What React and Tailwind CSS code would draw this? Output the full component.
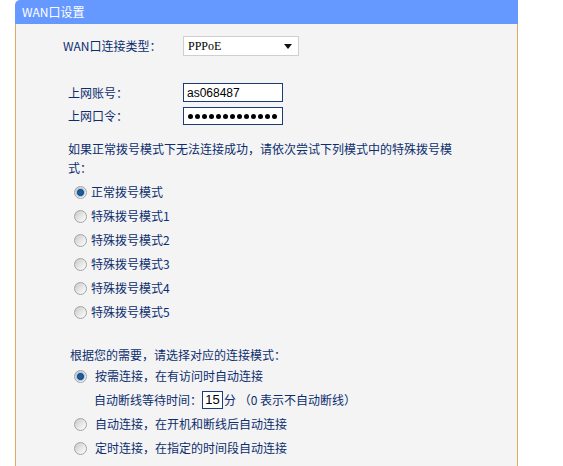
import React from "react";

const Radio = ({ checked }) => {
  return (
    <span className="relative w-[13px] h-[13px] rounded-full border border-[#a4a4a4] bg-gradient-to-br from-[#c8c8c8] via-[#e6e6e6] to-white flex items-center justify-center flex-shrink-0">
      {checked && (
        <span className="w-[7px] h-[7px] rounded-full bg-[#1d5f9c] border border-[#0d3a66] shadow-[0_0_0_1px_#9cc4e8]"></span>
      )}
    </span>
  );
};

const dialModes = [
  "正常拨号模式",
  "特殊拨号模式1",
  "特殊拨号模式2",
  "特殊拨号模式3",
  "特殊拨号模式4",
  "特殊拨号模式5",
];

const App = () => {
  return (
    <div className="w-[563px] h-[466px] bg-white overflow-hidden text-[12px] text-[#0c2e6e] font-['Noto_Sans_CJK_SC',sans-serif]">
      <div className="ml-[15px] w-[503px] h-full flex flex-col">
        <div className="h-[24px] bg-[#6699ff] rounded-tl-[5px] text-white flex items-center pl-[7px] flex-shrink-0">
          WAN口设置
        </div>
        <div className="flex-1 bg-[#f4f4f4] border-x border-[#e3a865]">
          {/* connection type */}
          <div className="mt-[12px] pl-[47px] flex items-center h-[20px]">
            <span className="w-[120px]">WAN口连接类型：</span>
            <div className="w-[116px] h-[20px] bg-white border border-[#cfcfcf] flex items-center justify-between pl-[4px] pr-[6px] text-black font-['Liberation_Serif',serif]">
              <span>PPPoE</span>
              <svg width="8" height="5" viewBox="0 0 8 5">
                <path d="M0 0h8L4 5z" fill="#111" />
              </svg>
            </div>
          </div>

          {/* account */}
          <div className="mt-[27px] pl-[52px] flex items-center h-[19px]">
            <span className="w-[115px]">上网账号：</span>
            <div className="w-[100px] h-[19px] bg-white border border-[#1c3c78] flex items-center px-[3px] text-black font-['Liberation_Sans',sans-serif]">
              as068487
            </div>
          </div>
          <div className="mt-[5px] pl-[52px] flex items-center h-[18px]">
            <span className="w-[115px]">上网口令：</span>
            <div className="w-[100px] h-[18px] bg-white border border-[#1c3c78] flex items-center gap-[2px] px-[4px]">
              {Array.from({ length: 13 }).map((_, i) => (
                <span key={i} className="w-[5px] h-[5px] rounded-full bg-black"></span>
              ))}
            </div>
          </div>

          <p className="mt-[14px] ml-[52px] w-[390px] leading-[19px]">
            如果正常拨号模式下无法连接成功，请依次尝试下列模式中的特殊拨号模式：
          </p>

          <div className="mt-[3px]">
            {dialModes.map((m, i) => (
              <div key={m} className="h-[24px] pl-[58px] flex items-center">
                <Radio checked={i === 0} />
                <span className="ml-[4px]">{m}</span>
              </div>
            ))}
          </div>

          <div className="mt-[21px] pl-[54px] h-[19px] leading-[19px]">
            根据您的需要，请选择对应的连接模式：
          </div>
          <div className="h-[24px] pl-[58px] flex items-center">
            <Radio checked />
            <span className="ml-[8px]">按需连接，在有访问时自动连接</span>
          </div>
          <div className="h-[24px] pl-[78px] flex items-center">
            <span>自动断线等待时间：</span>
            <div className="w-[21px] h-[18px] bg-white border border-[#1c3c78] flex items-center justify-center text-black font-['Liberation_Sans',sans-serif] text-[13px]">
              15
            </div>
            <span className="ml-[1px]">分 （0 表示不自动断线）</span>
          </div>
          <div className="h-[24px] pl-[58px] flex items-center">
            <Radio />
            <span className="ml-[8px]">自动连接，在开机和断线后自动连接</span>
          </div>
          <div className="h-[24px] pl-[58px] flex items-center">
            <Radio />
            <span className="ml-[8px]">定时连接，在指定的时间段自动连接</span>
          </div>
        </div>
      </div>
    </div>
  );
};

export default App;
